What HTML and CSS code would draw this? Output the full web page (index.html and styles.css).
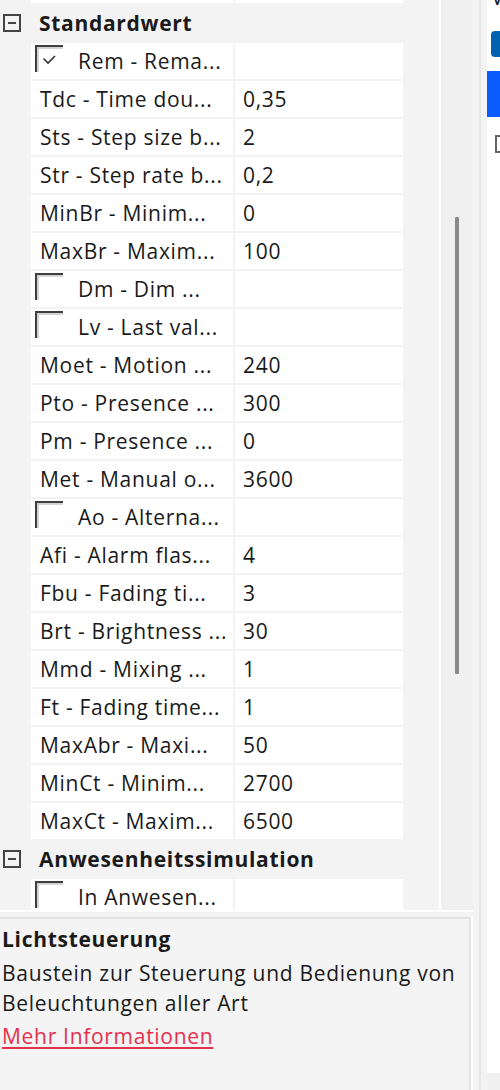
FILE: index.html
```html
<!DOCTYPE html>
<html lang="de">
<head>
<meta charset="utf-8">
<title>Eigenschaften</title>
<link rel="stylesheet" href="styles.css">
</head>
<body>
<div class="app">
  <div class="leftpane">
    <div class="listarea">
      <div class="grid">
        <div class="row partial"><div class="name"></div><div class="val"></div></div>

        <div class="row group">
          <svg class="expander" width="18" height="18" viewBox="0 0 18 18"><rect x="1" y="1" width="16" height="16" fill="none" stroke="#444" stroke-width="2"/><path d="M5 9h8" stroke="#444" stroke-width="2"/></svg>
          <span class="grouptitle">Standardwert</span>
        </div>

        <div class="row"><div class="name check"><span class="cb"><svg width="28" height="27" viewBox="0 0 28 27"><path d="M8.5 13.5l4.5 4.5l7-7" fill="none" stroke="#333" stroke-width="1.6"/></svg></span><span>Rem - Rema...</span></div><div class="val"></div></div>
        <div class="row"><div class="name">Tdc - Time dou...</div><div class="val">0,35</div></div>
        <div class="row"><div class="name">Sts - Step size b...</div><div class="val">2</div></div>
        <div class="row"><div class="name">Str - Step rate b...</div><div class="val">0,2</div></div>
        <div class="row"><div class="name">MinBr - Minim...</div><div class="val">0</div></div>
        <div class="row"><div class="name">MaxBr - Maxim...</div><div class="val">100</div></div>
        <div class="row"><div class="name check"><span class="cb"></span><span>Dm - Dim ...</span></div><div class="val"></div></div>
        <div class="row"><div class="name check"><span class="cb"></span><span>Lv - Last val...</span></div><div class="val"></div></div>
        <div class="row"><div class="name">Moet - Motion ...</div><div class="val">240</div></div>
        <div class="row"><div class="name">Pto - Presence ...</div><div class="val">300</div></div>
        <div class="row"><div class="name">Pm - Presence ...</div><div class="val">0</div></div>
        <div class="row"><div class="name">Met - Manual o...</div><div class="val">3600</div></div>
        <div class="row"><div class="name check"><span class="cb"></span><span>Ao - Alterna...</span></div><div class="val"></div></div>
        <div class="row"><div class="name">Afi - Alarm flas...</div><div class="val">4</div></div>
        <div class="row"><div class="name">Fbu - Fading ti...</div><div class="val">3</div></div>
        <div class="row"><div class="name">Brt - Brightness ...</div><div class="val">30</div></div>
        <div class="row"><div class="name">Mmd - Mixing ...</div><div class="val">1</div></div>
        <div class="row"><div class="name">Ft - Fading time...</div><div class="val">1</div></div>
        <div class="row"><div class="name">MaxAbr - Maxi...</div><div class="val">50</div></div>
        <div class="row"><div class="name">MinCt - Minim...</div><div class="val">2700</div></div>
        <div class="row"><div class="name">MaxCt - Maxim...</div><div class="val">6500</div></div>

        <div class="row group">
          <svg class="expander" width="18" height="18" viewBox="0 0 18 18"><rect x="1" y="1" width="16" height="16" fill="none" stroke="#444" stroke-width="2"/><path d="M5 9h8" stroke="#444" stroke-width="2"/></svg>
          <span class="grouptitle">Anwesenheitssimulation</span>
        </div>

        <div class="row"><div class="name check"><span class="cb"></span><span>In Anwesen...</span></div><div class="val"></div></div>
      </div>
      <div class="vscroll"><div class="thumb"></div></div>
    </div>
    <div class="desc">
      <div class="desc-title">Lichtsteuerung</div>
      <div class="desc-text">Baustein zur Steuerung und Bedienung von Beleuchtungen aller Art</div>
      <a class="desc-link" href="#">Mehr Informationen</a>
    </div>
  </div>
  <div class="splitter"><div class="splitline"></div></div>
  <div class="rightpane">
    <div class="rp-text">V</div>
    <div class="rp-check"></div>
    <div class="rp-sel"></div>
    <svg class="rp-exp" width="18" height="18" viewBox="0 0 18 18"><rect x="1" y="1" width="16" height="16" fill="none" stroke="#666" stroke-width="2"/><path d="M5 9h8" stroke="#666" stroke-width="2"/></svg>
    <div class="rp-fill"></div>
    <div class="rp-bottom"></div>
  </div>
</div>
</body>
</html>
```
FILE: styles.css
```css
html, body {
  margin: 0;
  padding: 0;
}
body {
  width: 500px;
  height: 1090px;
  overflow: hidden;
  background: #f3f3f3;
  font-family: "Open Sans", "Noto Sans", sans-serif;
  font-size: 21px;
  letter-spacing: 0.7px;
  color: #1a1a1a;
}
.app {
  display: flex;
  height: 1090px;
}
.leftpane {
  width: 473px;
  display: flex;
  flex-direction: column;
  flex: none;
}
.listarea {
  height: 910px;
  display: flex;
  border-bottom: 2px solid #ffffff;
  flex: none;
}
.grid {
  width: 439px;
  overflow: hidden;
  border-right: 2px solid #ffffff;
  flex: none;
}
.row {
  display: flex;
  height: 36px;
  margin-bottom: 2px;
  line-height: 36px;
  white-space: nowrap;
}
.row.partial {
  margin-top: -33px;
}
.name {
  margin-left: 31px;
  width: 193px;
  padding-left: 9px;
  background: #ffffff;
  overflow: hidden;
}
.name.check {
  display: flex;
  padding-left: 4px;
  width: 198px;
}
.cb {
  width: 26px;
  height: 25px;
  margin-top: 2px;
  margin-right: 15px;
  border-top: 2px solid #3f3f3f;
  border-left: 2px solid #3f3f3f;
  box-shadow: inset 2px 2px 0 #d4d4d4;
  position: relative;
  flex: none;
}
.cb svg {
  position: absolute;
  left: -2px;
  top: -2px;
}
.val {
  margin-left: 2px;
  width: 160px;
  padding-left: 8px;
  background: #ffffff;
}
.row.group {
  align-items: center;
}
.expander {
  margin-left: 3px;
  margin-top: -1px;
  flex: none;
}
.grouptitle {
  margin-left: 18px;
  font-weight: 700;
}
.vscroll {
  width: 32px;
  background: #f0f0f0;
  padding-top: 217px;
  flex: none;
}
.thumb {
  width: 4px;
  height: 457px;
  margin-left: 14px;
  background: #8a8a8a;
  border-radius: 1px;
}
.desc {
  margin-top: 5px;
  margin-right: 2px;
  flex: 1;
  border-top: 2px solid #e3e3e3;
  border-right: 2px solid #e3e3e3;
  box-shadow: 2px 0 0 #ffffff;
  background: #f4f4f4;
  padding: 5px 0 0 2px;
  line-height: 30px;
}
.desc-title {
  font-weight: 700;
  margin-bottom: 4px;
}
.desc-link {
  display: inline-block;
  margin-top: 3px;
  color: #e5304c;
  text-decoration: underline;
  text-underline-offset: 3px;
}
.splitter {
  width: 14px;
  flex: none;
  display: flex;
  justify-content: center;
}
.splitline {
  width: 2px;
  background: #e5e5e5;
}
.rightpane {
  width: 13px;
  flex: none;
  background: #ffffff;
  overflow: hidden;
  display: flex;
  flex-direction: column;
}
.rp-text {
  margin-top: -17px;
  margin-left: 4px;
  height: 28px;
  line-height: 28px;
  white-space: nowrap;
}
.rp-check {
  margin-top: 20px;
  margin-left: 4px;
  width: 26px;
  height: 26px;
  border-radius: 4px;
  background: #0063b1;
  flex: none;
}
.rp-sel {
  margin-top: 14px;
  height: 46px;
  width: 40px;
  background: #0a5cff;
  flex: none;
}
.rp-exp {
  margin-top: 18px;
  margin-left: 8px;
  flex: none;
}
.rp-fill {
  flex: 1;
}
.rp-bottom {
  height: 17px;
  background: #f0f0f0;
  flex: none;
}
```
